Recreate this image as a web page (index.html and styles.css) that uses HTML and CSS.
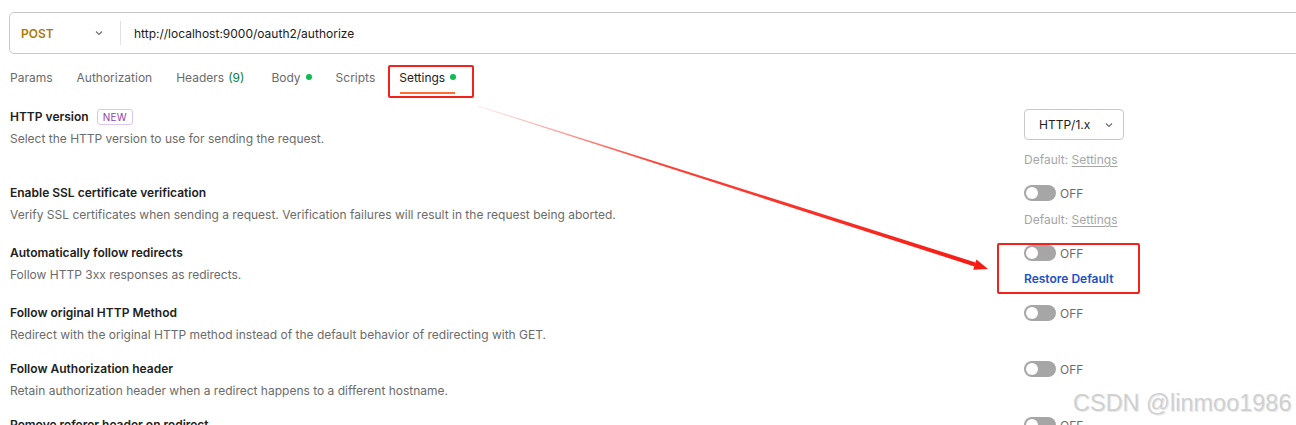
FILE: index.html
```html
<!DOCTYPE html>
<html lang="en">
<head>
    <meta charset="UTF-8">
    <title>Request Settings</title>
    <link rel="stylesheet" href="styles.css">
</head>
<body>
    <div class="page">
        <div class="url-bar">
            <div class="method">
                <span>POST</span>
                <svg class="chevron" width="10" height="10" viewBox="0 0 10 10"><path d="M2 3.5 L5 6.5 L8 3.5" fill="none" stroke="#6b6b6b" stroke-width="1.1"/></svg>
            </div>
            <div class="url">http://localhost:9000/oauth2/authorize</div>
        </div>

        <div class="tabs">
            <div class="tab">Params</div>
            <div class="tab">Authorization</div>
            <div class="tab">Headers <span class="count">(9)</span></div>
            <div class="tab">Body <span class="dot"></span></div>
            <div class="tab">Scripts</div>
            <div class="tab active">Settings <span class="dot"></span></div>
        </div>

        <div class="settings">
            <div class="row first">
                <div class="info">
                    <div class="title">HTTP version <span class="badge">NEW</span></div>
                    <div class="desc">Select the HTTP version to use for sending the request.</div>
                </div>
                <div class="control">
                    <div class="select">
                        <span>HTTP/1.x</span>
                        <svg width="10" height="10" viewBox="0 0 10 10"><path d="M2 3.5 L5 6.5 L8 3.5" fill="none" stroke="#6b6b6b" stroke-width="1.1"/></svg>
                    </div>
                    <div class="default">Default: <u>Settings</u></div>
                </div>
            </div>

            <div class="row second">
                <div class="info">
                    <div class="title">Enable SSL certificate verification</div>
                    <div class="desc">Verify SSL certificates when sending a request. Verification failures will result in the request being aborted.</div>
                </div>
                <div class="control">
                    <div class="switch"><span class="toggle"></span>OFF</div>
                    <div class="default">Default: <u>Settings</u></div>
                </div>
            </div>

            <div class="row">
                <div class="info">
                    <div class="title">Automatically follow redirects</div>
                    <div class="desc">Follow HTTP 3xx responses as redirects.</div>
                </div>
                <div class="control">
                    <div class="switch"><span class="toggle"></span>OFF</div>
                    <div class="restore">Restore Default</div>
                </div>
            </div>

            <div class="row">
                <div class="info">
                    <div class="title">Follow original HTTP Method</div>
                    <div class="desc">Redirect with the original HTTP method instead of the default behavior of redirecting with GET.</div>
                </div>
                <div class="control">
                    <div class="switch"><span class="toggle"></span>OFF</div>
                </div>
            </div>

            <div class="row">
                <div class="info">
                    <div class="title">Follow Authorization header</div>
                    <div class="desc">Retain authorization header when a redirect happens to a different hostname.</div>
                </div>
                <div class="control">
                    <div class="switch"><span class="toggle"></span>OFF</div>
                </div>
            </div>

            <div class="row">
                <div class="info">
                    <div class="title">Remove referer header on redirect</div>
                    <div class="desc">Remove the referer header when a redirect happens.</div>
                </div>
                <div class="control">
                    <div class="switch"><span class="toggle"></span>OFF</div>
                </div>
            </div>
        </div>

        <!-- annotations drawn on top of the screenshot -->
        <div class="mark mark-tab"></div>
        <div class="mark mark-restore"></div>
        <svg class="arrow" width="1296" height="425" viewBox="0 0 1296 425">
            <defs>
                <linearGradient id="fade" x1="478" y1="106" x2="988" y2="269" gradientUnits="userSpaceOnUse">
                    <stop offset="0" stop-color="#ff2a1f" stop-opacity="0.1"/>
                    <stop offset="0.35" stop-color="#ff2a1f" stop-opacity="0.9"/>
                    <stop offset="1" stop-color="#f51c14"/>
                </linearGradient>
            </defs>
            <polygon points="478,105.6 975.6,262.4 974.4,266.4 478,106.4" fill="url(#fade)"/>
            <polygon points="988,269 976.4,259.6 973.2,269.8" fill="#f51c14"/>
        </svg>
        <div class="watermark">CSDN @linmoo1986</div>
    </div>
</body>
</html>
```

FILE: styles.css
```css
* {
    margin: 0;
    padding: 0;
    box-sizing: border-box;
}

body {
    font-family: Inter, "Noto Sans", sans-serif;
    font-size: 12px;
    color: #212121;
    background: white;
    overflow: hidden;
}

.page {
    position: relative;
    height: 425px;
    padding: 12px 0 0 9px;
    overflow: hidden;
}

.url-bar {
    display: flex;
    align-items: center;
    height: 42px;
    margin-right: -20px;
    border: 1px solid #c9c9c9;
    border-radius: 5px;
}

.method {
    display: flex;
    align-items: center;
    justify-content: space-between;
    width: 111px;
    height: 24px;
    padding: 0 16px 0 11px;
    border-right: 1px solid #e2e2e2;
    color: #ad7a03;
    font-weight: 600;
}

.url {
    padding-left: 13px;
    color: #212121;
}

.tabs {
    display: flex;
    gap: 24px;
    height: 44px;
    padding-left: 1px;
}

.tab {
    display: flex;
    align-items: center;
    gap: 5px;
    height: 44px;
    padding-top: 2px;
    color: #6b6b6b;
    font-size: 12px;
}

.tab .count {
    color: #0a7d3f;
    margin: 0 3px 0 -1px;
}

.tab .dot {
    width: 6px;
    height: 6px;
    border-radius: 50%;
    background: #0cbb52;
}

.tab.active {
    position: relative;
    color: #212121;
}

.tab.active::after {
    content: "";
    position: absolute;
    left: 1px;
    right: 1px;
    bottom: 4px;
    height: 2px;
    background: #ff6c37;
}

.settings {
    padding: 11px 0 0 1px;
}

.row {
    display: grid;
    grid-template-columns: 1fr 272px;
    padding-bottom: 18px;
}

.title {
    display: flex;
    align-items: center;
    gap: 8px;
    height: 16px;
    line-height: 16px;
    font-weight: 600;
    color: #212121;
}

.badge {
    font-size: 10px;
    font-weight: 400;
    letter-spacing: 0.3px;
    color: #8e3fb0;
    border: 1px solid #dcc6ef;
    border-radius: 3px;
    padding: 0 5px;
    line-height: 14px;
}

.desc {
    margin-top: 6px;
    line-height: 16px;
    color: #6b6b6b;
}

.control {
    display: flex;
    flex-direction: column;
    align-items: flex-start;
}

.select {
    display: flex;
    align-items: center;
    justify-content: space-between;
    width: 100px;
    height: 31px;
    padding: 0 9px 0 14px;
    border: 1px solid #c9c9c9;
    border-radius: 4px;
    font-size: 12px;
}

.default {
    margin-top: 11px;
    line-height: 16px;
    color: #a6a6a6;
}

.first .default {
    margin-top: 12px;
    margin-bottom: -1px;
}

.second .default {
    margin-bottom: -1px;
}

.default u {
    text-underline-offset: 2px;
}

.switch {
    display: flex;
    align-items: center;
    gap: 4px;
    height: 16px;
    color: #6b6b6b;
}

.toggle {
    position: relative;
    width: 32px;
    height: 16px;
    border-radius: 8px;
    background: #a6a6a6;
}

.toggle::after {
    content: "";
    position: absolute;
    left: 2px;
    top: 2px;
    width: 12px;
    height: 12px;
    border-radius: 50%;
    background: white;
}

.restore {
    margin-top: 10px;
    line-height: 16px;
    font-weight: 600;
    color: #1d4fc4;
}

.mark {
    position: absolute;
    border: 2px solid #f5211d;
    border-radius: 2px;
}

.mark-tab {
    left: 388px;
    top: 65px;
    width: 86px;
    height: 33px;
}

.mark-restore {
    left: 997px;
    top: 243px;
    width: 143px;
    height: 51px;
}

.arrow {
    position: absolute;
    left: 0;
    top: 0;
}

.watermark {
    position: absolute;
    left: 1073px;
    top: 390px;
    font-family: "Liberation Sans", Arial, sans-serif;
    font-size: 23.5px;
    color: #cfcfcf;
    text-shadow: 0 0 1px white, 1px 1px 0 #e8e8e8;
}
```
